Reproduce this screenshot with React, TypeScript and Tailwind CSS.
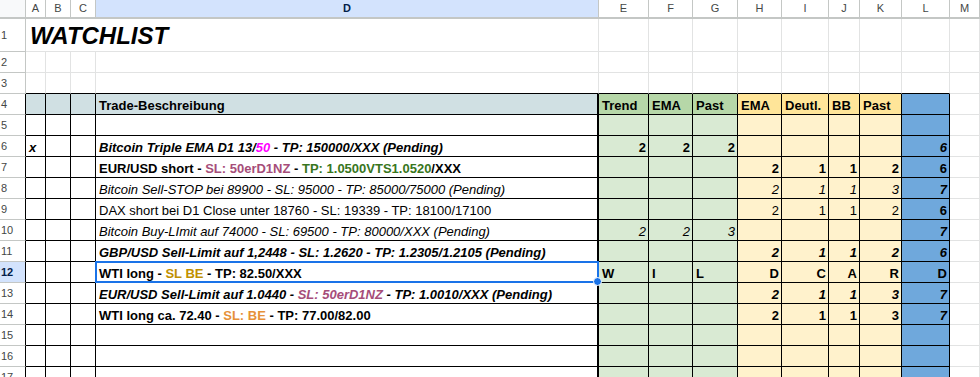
import type { ReactNode } from 'react'

type St = '' | 'b' | 'i' | 'bi'

const fonts: Record<St, string> = { '': '', b: 'font-bold', i: 'italic', bi: 'font-bold italic' }

const letters = ['A', 'B', 'C', 'D', 'E', 'F', 'G', 'H', 'I', 'J', 'K', 'L', 'M']

type Row = {
  n: number
  a?: string
  d?: ReactNode
  dSt?: St
  vals?: string[]
  vSt?: St
  leftEG?: boolean
  l?: string
  lSt?: St
}

const plum = 'text-[#a64d79]'

const rows: Row[] = [
  { n: 5 },
  {
    n: 6,
    a: 'x',
    dSt: 'bi',
    d: (
      <>
        Bitcoin Triple EMA D1 13/<span className="text-[#ff00ff]">50</span> - TP: 150000/XXX (Pending)
      </>
    ),
    vals: ['2', '2', '2', '', '', '', ''],
    vSt: 'b',
    l: '6',
    lSt: 'bi',
  },
  {
    n: 7,
    dSt: 'b',
    d: (
      <>
        EUR/USD short - <span className={plum}>SL: 50erD1NZ</span> -{' '}
        <span className="text-[#38761d]">TP: 1.0500VTS1.0520</span>/XXX
      </>
    ),
    vals: ['', '', '', '2', '1', '1', '2'],
    vSt: 'b',
    l: '6',
    lSt: 'b',
  },
  {
    n: 8,
    dSt: 'i',
    d: 'Bitcoin Sell-STOP bei 89900 - SL: 95000 - TP: 85000/75000 (Pending)',
    vals: ['', '', '', '2', '1', '1', '3'],
    vSt: 'i',
    l: '7',
    lSt: 'bi',
  },
  {
    n: 9,
    dSt: '',
    d: 'DAX short bei D1 Close unter 18760 - SL: 19339 - TP: 18100/17100',
    vals: ['', '', '', '2', '1', '1', '2'],
    vSt: '',
    l: '6',
    lSt: 'b',
  },
  {
    n: 10,
    dSt: 'i',
    d: 'Bitcoin Buy-LImit auf 74000 - SL: 69500 - TP: 80000/XXX (Pending)',
    vals: ['2', '2', '3', '', '', '', ''],
    vSt: 'i',
    l: '7',
    lSt: 'bi',
  },
  {
    n: 11,
    dSt: 'bi',
    d: 'GBP/USD Sell-Limit auf 1,2448 - SL: 1.2620 - TP: 1.2305/1.2105 (Pending)',
    vals: ['', '', '', '2', '1', '1', '2'],
    vSt: 'bi',
    l: '6',
    lSt: 'bi',
  },
  {
    n: 12,
    dSt: 'b',
    d: (
      <>
        WTI long - <span className="text-[#bf9000]">SL BE</span> - TP: 82.50/XXX
      </>
    ),
    vals: ['W', 'I', 'L', 'D', 'C', 'A', 'R'],
    vSt: 'b',
    leftEG: true,
    l: 'D',
    lSt: 'b',
  },
  {
    n: 13,
    dSt: 'bi',
    d: (
      <>
        EUR/USD Sell-Limit auf 1.0440 - <span className={plum}>SL: 50erD1NZ</span> - TP: 1.0010/XXX (Pending)
      </>
    ),
    vals: ['', '', '', '2', '1', '1', '3'],
    vSt: 'bi',
    l: '7',
    lSt: 'bi',
  },
  {
    n: 14,
    dSt: 'b',
    d: (
      <>
        WTI long ca. 72.40 - <span className="text-[#e69138]">SL: BE</span> - TP: 77.00/82.00
      </>
    ),
    vals: ['', '', '', '2', '1', '1', '3'],
    vSt: 'b',
    l: '7',
    lSt: 'bi',
  },
  { n: 15 },
  { n: 16 },
  { n: 17 },
]

const gray = 'border-r border-b border-[#e2e3e3]'
const black = 'border-r border-b border-black'
const cellText = 'flex items-end pb-[1px] px-[3px] leading-[15px] whitespace-nowrap'

function RowHead({ n, h, table }: { n: number; h: string; table?: boolean }) {
  const sel = n === 12
  return (
    <div
      className={`${h} flex items-center pl-[1px] text-[11px] border-b border-[#c4c7c5] border-r ${
        table ? 'border-r-black' : ''
      } ${sel ? 'bg-[#d3e3fd] font-bold text-[#041e49]' : 'bg-white text-[#444746]'}`}
    >
      {n}
    </div>
  )
}

function DataRow({ r }: { r: Row }) {
  const vals = r.vals ?? ['', '', '', '', '', '', '']
  return (
    <>
      <RowHead n={r.n} h="h-[21px]" table />
      <div className={`h-[21px] ${black} ${cellText} ${fonts.bi}`}>
        <span>{r.a}</span>
      </div>
      <div className={`h-[21px] ${black}`} />
      <div className={`h-[21px] ${black}`} />
      <div className={`relative h-[21px] border-r-2 border-b border-black ${cellText} ${fonts[r.dSt ?? '']}`}>
        <span>{r.d}</span>
        {r.n === 12 && (
          <div className="absolute -left-[1px] -top-[1px] -right-[2px] -bottom-[1px] z-10 border-2 border-[#1a73e8]">
            <div className="absolute -right-[5px] -bottom-[5px] h-[9px] w-[9px] rounded-full border-[1.5px] border-white bg-[#1a73e8]" />
          </div>
        )}
      </div>
      {vals.map((v, i) => (
        <div
          key={i}
          className={`h-[21px] ${black} ${cellText} ${fonts[r.vSt ?? '']} ${
            i < 3 ? 'bg-[#d9ead3]' : 'bg-[#fff2cc]'
          } ${i < 3 && r.leftEG ? 'justify-start' : 'justify-end pr-[2px]'}`}
        >
          <span>{v}</span>
        </div>
      ))}
      <div className={`h-[21px] ${black} ${cellText} justify-end pr-[2px] bg-[#6fa8dc] ${fonts[r.lSt ?? 'b']}`}>
        <span>{r.l}</span>
      </div>
      <div className={`h-[21px] ${gray}`} />
    </>
  )
}

export default function App() {
  return (
    <div className="h-[377px] w-[980px] overflow-hidden bg-white text-[13px] text-black font-['Liberation_Sans',Arial,sans-serif]">
      <div className="grid grid-cols-[26px_20px_25px_25px_503px_50px_44px_45px_44px_47px_31px_42px_48px_30px]">
        {/* column headers */}
        <div className="h-[19px] bg-[#f8f9fa] border-r border-b-2 border-[#c4c7c5]" />
        {letters.map(c => (
          <div
            key={c}
            className={`h-[19px] flex items-center justify-center text-[11px] border-r border-b-2 border-[#c4c7c5] ${
              c === 'D' ? 'bg-[#d3e3fd] font-bold text-[#041e49]' : 'bg-white text-[#444746]'
            }`}
          >
            {c}
          </div>
        ))}

        {/* row 1 */}
        <RowHead n={1} h="h-[33px]" />
        <div className={`col-span-4 h-[33px] ${gray} flex items-end pb-[2px] pl-[4px] text-[24px] leading-[27px] font-bold italic`}>
          WATCHLIST
        </div>
        {letters.slice(4).map(c => (
          <div key={c} className={`h-[33px] ${gray}`} />
        ))}

        {/* rows 2 and 3 */}
        <RowHead n={2} h="h-[21px]" />
        {letters.map(c => (
          <div key={c} className={`h-[21px] ${gray}`} />
        ))}
        <RowHead n={3} h="h-[21px]" />
        {letters.map(c => (
          <div key={c} className={`h-[21px] ${gray} ${c !== 'M' ? 'border-b-black' : ''}`} />
        ))}

        {/* row 4: table header */}
        <RowHead n={4} h="h-[21px]" table />
        <div className={`h-[21px] ${black} bg-[#d0e0e3]`} />
        <div className={`h-[21px] ${black} bg-[#d0e0e3]`} />
        <div className={`h-[21px] ${black} bg-[#d0e0e3]`} />
        <div className={`h-[21px] border-r-2 border-b border-black bg-[#d0e0e3] ${cellText} font-bold`}>
          Trade-Beschreibung
        </div>
        {['Trend', 'EMA', 'Past'].map(t => (
          <div key={t} className={`h-[21px] ${black} bg-[#b6d7a8] ${cellText} font-bold`}>
            {t}
          </div>
        ))}
        {['EMA', 'Deutl.', 'BB', 'Past'].map(t => (
          <div key={t} className={`h-[21px] ${black} bg-[#ffe599] ${cellText} font-bold`}>
            {t}
          </div>
        ))}
        <div className={`h-[21px] ${black} bg-[#6fa8dc]`} />
        <div className={`h-[21px] ${gray}`} />

        {rows.map(r => (
          <DataRow key={r.n} r={r} />
        ))}
      </div>
    </div>
  )
}
